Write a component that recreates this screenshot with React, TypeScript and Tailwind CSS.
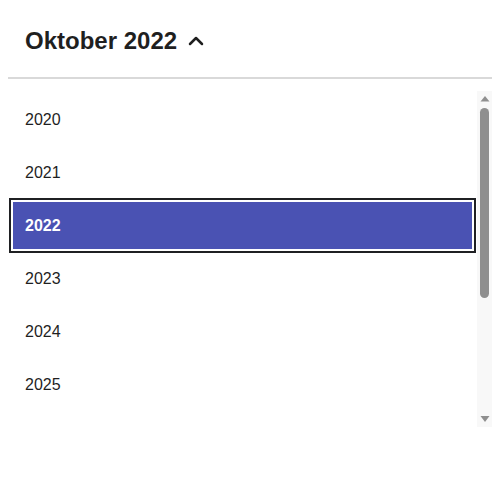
import React from "react";
import { ChevronUp } from "lucide-react";

const years = [2020, 2021, 2022, 2023, 2024, 2025, 2026, 2027, 2028, 2029];

export default function App() {
  return (
    <div className="w-[500px] h-[500px] bg-white px-[8px]" style={{ fontFamily: '"Liberation Sans", Arial, sans-serif' }}>
      <div className="h-[79px] flex items-center pl-[17px] pt-[5px] border-b-2 border-[#d9d9d9]">
        <span className="text-[24px] font-bold text-[#1f1f1f] leading-none">Oktober 2022</span>
        <ChevronUp size={24} strokeWidth={2.5} className="ml-[7px] text-[#1f1f1f]" />
      </div>
      <div className="mt-[12px] h-[336px] flex">
        <div className="flex-1 overflow-hidden">
          <div className="flex flex-col gap-[6px] py-[5px]">
            {years.map((y) => (
              <div
                key={y}
                className={
                  y === 2022
                    ? "mx-[5px] h-[47px] shrink-0 flex items-center pl-[12px] text-[16px] font-bold text-white bg-[#4a52b3] shadow-[0_0_0_2px_#ffffff,0_0_0_4px_#1f2023]"
                    : "mx-[5px] h-[47px] shrink-0 flex items-center pl-[12px] text-[16px] text-[#1f1f1f]"
                }
              >
                {y}
              </div>
            ))}
          </div>
        </div>
        <div className="w-[15px] bg-[#f8f8f8] flex flex-col items-center">
          <svg width="10" height="17" viewBox="0 0 10 17" className="shrink-0">
            <polygon points="5,5 9.5,10.5 0.5,10.5" fill="#8f8f8f" />
          </svg>
          <div className="w-[9px] h-[190px] rounded-full bg-[#8f8f8f]" />
          <div className="flex-1" />
          <svg width="10" height="16" viewBox="0 0 10 16" className="shrink-0">
            <polygon points="0.5,0 9.5,0 5,6" fill="#8f8f8f" transform="translate(0,5)" />
          </svg>
        </div>
      </div>
    </div>
  );
}
